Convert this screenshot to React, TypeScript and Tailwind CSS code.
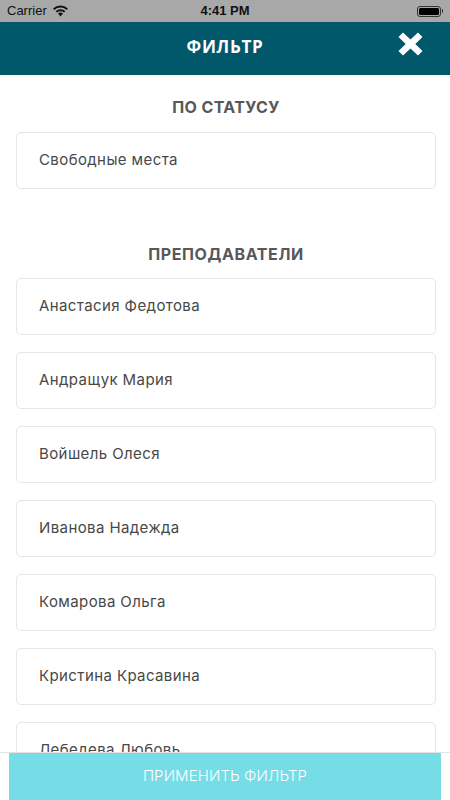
import React from "react";

const teachers = [
  "Анастасия Федотова",
  "Андращук Мария",
  "Войшель Олеся",
  "Иванова Надежда",
  "Комарова Ольга",
  "Кристина Красавина",
  "Лебедева Любовь",
];

function Card({ label }: { label: string }) {
  return (
    <div className="h-[57px] rounded-[5px] border border-[#e6e6e6] bg-white flex items-center pl-[22px] shrink-0">
      <span className="text-[15px] text-[#484848] tracking-[0.4px]">{label}</span>
    </div>
  );
}

export default function App() {
  return (
    <div
      className="w-[450px] h-[800px] bg-white relative overflow-hidden flex flex-col"
      style={{ fontFamily: "Inter, 'Noto Sans', sans-serif" }}
    >
      {/* status bar */}
      <div className="h-[22px] bg-[#a8a8a8] flex items-center justify-between px-[7px] shrink-0 relative">
        <div className="flex items-center gap-[5px]">
          <span className="text-[13px] text-[#111]" style={{ fontFamily: "'Liberation Sans', sans-serif" }}>Carrier</span>
          <svg width="17" height="12" viewBox="0 0 17 12">
            <path d="M8.5 11.5 L6 8.6 A3.8 3.8 0 0 1 11 8.6 Z" fill="#111" />
            <path d="M3.6 6.2 A7 7 0 0 1 13.4 6.2 L12 7.6 A5 5 0 0 0 5 7.6 Z" fill="#111" />
            <path d="M1 3.6 A10.8 10.8 0 0 1 16 3.6 L14.6 5 A8.8 8.8 0 0 0 2.4 5 Z" fill="#111" />
          </svg>
        </div>
        <span
          className="absolute left-1/2 -translate-x-1/2 text-[13px] font-semibold text-[#111]"
          style={{ fontFamily: "'Liberation Sans', sans-serif" }}
        >
          4:41 PM
        </span>
        <div className="flex items-center">
          <div className="w-[24px] h-[11px] rounded-[3px] border border-[#333] p-[1px]">
            <div className="w-full h-full bg-black rounded-[1.5px]" />
          </div>
          <div className="w-[1.5px] h-[4px] bg-[#333] ml-[1px] rounded-r" />
        </div>
      </div>

      {/* header */}
      <div className="h-[53px] bg-[#02586b] flex items-center justify-center relative shrink-0">
        <span
          className="text-white text-[17px] font-bold tracking-[0.7px] mb-[3px]"
          style={{ fontFamily: "'Open Sans', sans-serif" }}
        >
          ФИЛЬТР
        </span>
        <svg className="absolute left-[398px] top-[10px]" width="25" height="24" viewBox="0 0 25 24">
          <path
            d="M0.5 5 L5 0.5 L12.5 7.5 L20 0.5 L24.5 5 L17.3 12 L24.5 19 L20 23.5 L12.5 16.5 L5 23.5 L0.5 19 L7.7 12 Z"
            fill="white"
          />
        </svg>
      </div>

      {/* content */}
      <div className="flex flex-col px-[16px] pr-[14px]">
        <div className="h-[57px] flex items-center justify-center">
          <span className="text-[16px] font-bold text-[#58585a] tracking-[0.4px] mt-[6px]">ПО СТАТУСУ</span>
        </div>
        <Card label="Свободные места" />
        <div className="h-[89px] flex items-end justify-center pb-[12px]">
          <span className="text-[16px] font-bold text-[#58585a] tracking-[0.6px]">ПРЕПОДАВАТЕЛИ</span>
        </div>
        <div className="flex flex-col gap-[17px]">
          {teachers.map((t) => (
            <Card key={t} label={t} />
          ))}
        </div>
      </div>

      {/* bottom bar */}
      <div className="absolute left-0 right-0 bottom-0 h-[48px] bg-white border-t border-[#e2e2e2] px-[9px]">
        <div className="h-full bg-[#76dce6] flex items-center justify-center">
          <span className="text-white text-[15px] font-light tracking-[0.1px]">ПРИМЕНИТЬ ФИЛЬТР</span>
        </div>
      </div>
    </div>
  );
}
